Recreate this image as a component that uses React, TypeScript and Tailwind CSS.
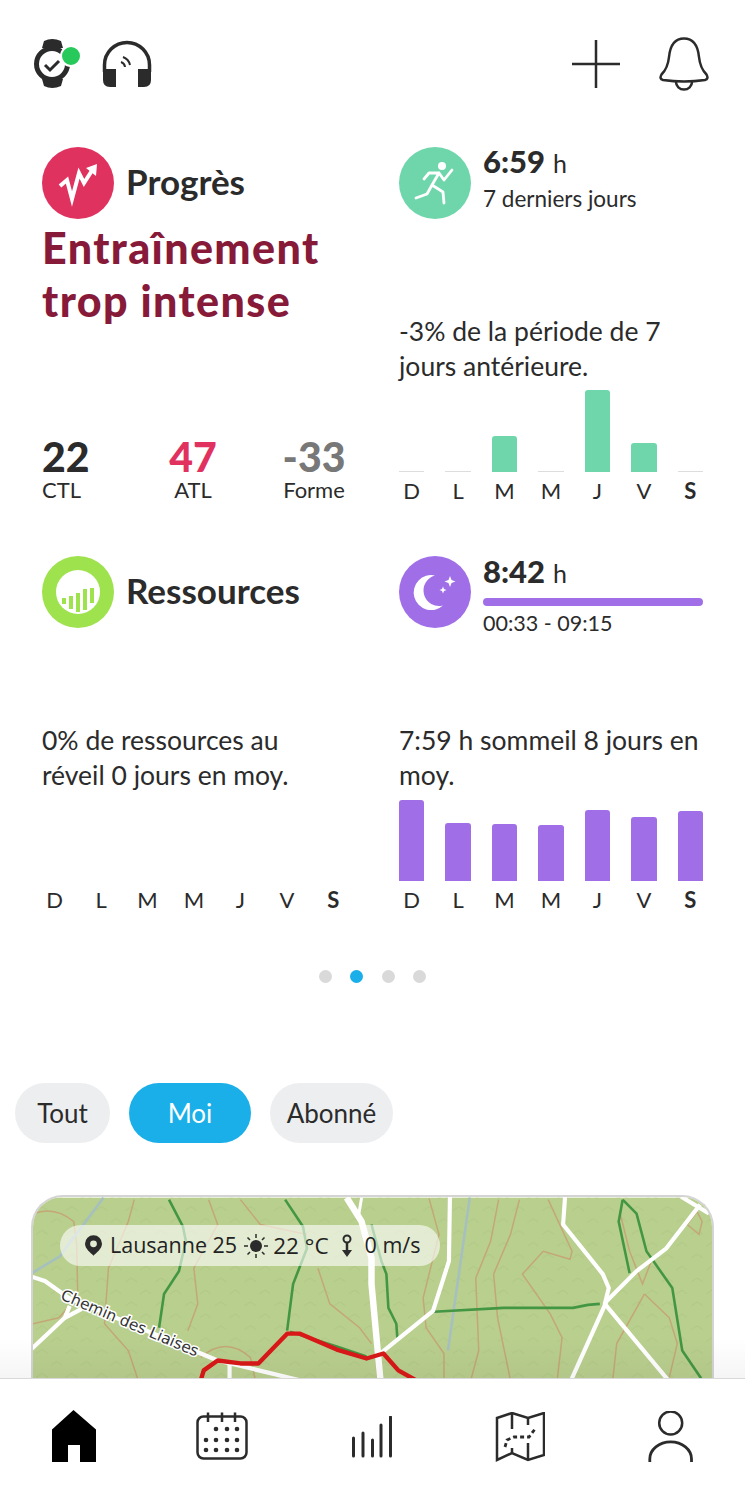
const days = ["D", "L", "M", "M", "J", "V", "S"];

function Chart({ values, barClass }: { values: number[]; barClass: string }) {
  return (
    <div>
      <div className="grid h-[82px] grid-cols-7 items-end gap-x-[21px]">
        {values.map((v, i) =>
          v > 0 ? (
            <div key={i} className={`rounded-t-[3px] ${barClass}`} style={{ height: v }} />
          ) : (
            <div key={i} className={barClass === "" ? "h-0" : "h-[1px] bg-[#dddddd]"} />
          ),
        )}
      </div>
      <div className="mt-[5px] grid grid-cols-7 gap-x-[21px]">
        {days.map((d, i) => (
          <div key={i} className={`text-center text-[22px] leading-[27px] ${i === 6 ? "font-bold" : ""}`}>
            {d}
          </div>
        ))}
      </div>
    </div>
  );
}

function WatchIcon() {
  return (
    <svg width="48" height="52" viewBox="0 0 48 52">
      <path d="M9 10 L11 3 Q19 -1 28 3 L30 10 Z M9 41 L11 48 Q19 52 28 48 L30 41 Z" fill="#2b2b2b" />
      <circle cx="19" cy="26" r="15.5" fill="#fff" stroke="#2b2b2b" strokeWidth="5" />
      <path d="M12 27 L17 32 L26 23" fill="none" stroke="#2b2b2b" strokeWidth="3" />
      <circle cx="38" cy="18" r="10" fill="#27c95b" stroke="#fff" strokeWidth="2" />
    </svg>
  );
}

function HeadphonesIcon() {
  return (
    <svg width="50" height="48" viewBox="0 0 50 48">
      <path d="M2.5 32 V25 A22.5 22.5 0 0 1 47.5 25 V32" fill="none" stroke="#2b2b2b" strokeWidth="3.5" />
      <path d="M1 29 H14 V47 H8 Q1 47 1 40 Z M49 29 H36 V47 H42 Q49 47 49 40 Z" fill="#2b2b2b" />
      <path d="M19 22 A6 6 0 0 1 23 27 M21 17 A11 11 0 0 1 28 25" fill="none" stroke="#2b2b2b" strokeWidth="2" />
    </svg>
  );
}

function PlusIcon() {
  return (
    <svg width="48" height="48" viewBox="0 0 48 48">
      <path d="M24 0 V48 M0 24 H48" stroke="#2b2b2b" strokeWidth="2.5" />
    </svg>
  );
}

function BellIcon() {
  return (
    <svg width="50" height="54" viewBox="0 0 50 54">
      <path
        d="M25 1.5 C15 1.5 11 10 10 20 C9 30 6 34 2.5 37.5 Q0 42 4 43 Q25 46 46 43 Q50 42 47.5 37.5 C44 34 41 30 40 20 C39 10 35 1.5 25 1.5 Z"
        fill="none"
        stroke="#2b2b2b"
        strokeWidth="2.5"
      />
      <path d="M17 45 A8 7.5 0 0 0 33 45" fill="none" stroke="#2b2b2b" strokeWidth="2.5" />
    </svg>
  );
}

function ProgressIcon() {
  return (
    <svg width="72" height="72" viewBox="0 0 72 72" className="shrink-0">
      <circle cx="36" cy="36" r="36" fill="#e0325f" />
      <path d="M18 39 L25 33 L30 52 L37 26 L42 36 L51 22" fill="none" stroke="#fff" strokeWidth="4" />
      <path d="M44 21 L55 17 L54 29 Z" fill="#fff" />
    </svg>
  );
}

function RunIcon() {
  return (
    <svg width="72" height="72" viewBox="0 0 72 72" className="shrink-0">
      <circle cx="36" cy="36" r="36" fill="#6fd6ab" />
      <circle cx="43" cy="19" r="4" fill="#fff" />
      <path
        d="M25 32 L30 26 L40 26 L33 38 L44 45 L45 56 M33 38 L28 47 L17 51 M40 26 L45 33 L53 23"
        fill="none"
        stroke="#fff"
        strokeWidth="2.8"
        strokeLinecap="round"
        strokeLinejoin="round"
      />
    </svg>
  );
}

function ResourceIcon() {
  return (
    <svg width="72" height="72" viewBox="0 0 72 72" className="shrink-0">
      <circle cx="36" cy="36" r="36" fill="#9ee24e" />
      <circle cx="36" cy="36" r="22" fill="#fff" />
      <path d="M22 42 V48 M29 40 V53 M36 37 V56 M43 33 V54 M50 32 V47" stroke="#9ee24e" strokeWidth="4" />
    </svg>
  );
}

function SleepIcon() {
  return (
    <svg width="72" height="72" viewBox="0 0 72 72" className="shrink-0">
      <circle cx="36" cy="36" r="36" fill="#a06fe8" />
      <path d="M36 19.5 A17.5 17.5 0 1 0 44 49.5 A15.5 15.5 0 0 1 36 19.5 Z" fill="#fff" />
      <path d="M51 20 L52.5 24 L56.5 25.5 L52.5 27 L51 31 L49.5 27 L45.5 25.5 L49.5 24 Z" fill="#fff" />
      <path d="M44 30.5 L45 33 L47.5 34 L45 35 L44 37.5 L43 35 L40.5 34 L43 33 Z" fill="#fff" />
    </svg>
  );
}

function MapDrawing() {
  const roads = [
    "M28 1275 L43 1280 L67 1297 L200 1353 L217 1360 L300 1380",
    "M28 1350 L63 1317 L68 1305 M80 1308 L63 1317",
    "M229 1362 V1380",
    "M451 1195 L450 1260 L434 1310 L382 1352",
    "M567 1195 L565 1223 L605 1273 L611 1287 L607 1303 L671 1380",
    "M703 1203 L669 1247 L639 1270 L609 1300 L573 1380",
    "M684 1195 L712 1212",
  ];
  const greens = [
    "M168 1198 L182 1225 L185 1240 L178 1270 L163 1293 L158 1327",
    "M285 1198 L303 1225 L307 1247 L293 1283 L287 1330",
    "M372 1223 L382 1260 L387 1273 L389 1307 L397 1323 L398 1337",
    "M435 1311 L505 1307 L575 1307 L590 1304 L602 1303",
    "M625 1198 L621 1220 L632 1272",
    "M625 1198 L639 1212 L649 1250 L675 1287 L685 1350 L704 1378",
    "M290 1331 L337 1346 L367 1356",
  ];
  const contours = [
    "M31 1212 Q53 1204 72 1220 L75 1243 L76 1290",
    "M133 1198 L127 1220 L107 1267 L103 1323 L127 1350 L137 1380",
    "M31 1323 L57 1317 L68 1305",
    "M208 1198 L217 1223 L193 1267 L197 1303 L187 1330",
    "M240 1198 L260 1223 L307 1233",
    "M318 1267 L330 1303 L360 1327 L372 1343",
    "M200 1357 Q225 1335 250 1357 L255 1380",
    "M430 1197 L440 1233 L424 1297 L427 1327 L445 1353 L445 1380",
    "M500 1198 L492 1240 L477 1277 L480 1350 L472 1380",
    "M521 1198 L512 1233 L495 1273 L499 1317 L512 1380",
    "M550 1198 L574 1250 L572 1258 L545 1250 L524 1273 L552 1313 L564 1337 L559 1380",
    "M647 1293 L672 1317 L680 1343 L672 1377 M647 1293 L619 1343 L615 1380",
    "M632 1250 L645 1283 L655 1257",
    "M622 1210 L632 1250",
    "M700 1210 L690 1223 L702 1233 L705 1220 Z",
    "M372 1290 L378 1380",
  ];
  return (
    <svg viewBox="31 1196 684 184" className="block h-[184px] w-full">
      <defs>
        <pattern id="chev" x="0" y="0" width="30" height="24" patternUnits="userSpaceOnUse">
          <path d="M4 9 L10 5 L16 9 M19 21 L25 17 L30 21" fill="none" stroke="#afc684" strokeWidth="1" />
        </pattern>
      </defs>
      <rect x="31" y="1196" width="684" height="184" fill="#b9cf8e" />
      <rect x="31" y="1196" width="684" height="184" fill="url(#chev)" />
      <g fill="none" stroke="#c4a776" strokeWidth="1.5">
        {contours.map((d) => (
          <path key={d} d={d} />
        ))}
      </g>
      <path
        d="M102 1196 L58 1255 L30 1272 M58 1255 L72 1235 M471 1196 L449 1350"
        fill="none"
        stroke="#a5c0bf"
        strokeWidth="2.6"
      />
      <g fill="none" stroke="#439643" strokeWidth="2.6">
        {greens.map((d) => (
          <path key={d} d={d} />
        ))}
      </g>
      <g fill="none" stroke="#ffffff" strokeWidth="4.2" strokeLinejoin="round">
        {roads.map((d) => (
          <path key={d} d={d} />
        ))}
      </g>
      <path d="M347 1196 L362 1220 L372 1257 L372 1283 L381 1380" fill="none" stroke="#fff" strokeWidth="6.5" />
      <path d="M362 1196 L359 1214" fill="none" stroke="#fff" strokeWidth="3" />
      <path
        d="M200 1380 L203 1370 L217 1360 L240 1363 L258 1363 L287 1333 L300 1333 L337 1349 L367 1358 L384 1353 L399 1370 L417 1380"
        fill="none"
        stroke="#d91818"
        strokeWidth="4.4"
        strokeLinejoin="round"
      />
      <text
        x="58"
        y="1298"
        transform="rotate(23 58 1298)"
        fontSize="15.5"
        fill="#333"
        stroke="#fff"
        strokeWidth="3"
        paintOrder="stroke"
        fontFamily="'DejaVu Sans', sans-serif"
      >
        Chemin des Liaises
      </text>
    </svg>
  );
}

function NavIcons() {
  return (
    <nav className="grid h-[122px] shrink-0 grid-cols-5 items-start border-t border-[#d9d9d9] bg-white pt-[31px]">
      <div className="flex justify-center">
        <svg width="46" height="52" viewBox="0 0 46 52" className="-ml-[1px]">
          <path d="M22.5 0 L45 19.5 V52 H29 V35 H17 V52 H1 V19.5 Z" fill="#000" />
        </svg>
      </div>
      <div className="flex justify-center pt-[2px]">
        <svg width="52" height="50" viewBox="197 1412 52 50" className="-ml-[3px]">
          <rect x="198.5" y="1416.5" width="49" height="42" rx="6" fill="none" stroke="#2b2b2b" strokeWidth="2.5" />
          <path d="M209 1412.5 V1422 M223 1412.5 V1422 M236 1412.5 V1422" stroke="#2b2b2b" strokeWidth="2.5" />
          <g fill="#2b2b2b">
            {[217, 228, 238].map((x) => (
              <circle key={x} cx={x} cy={1429} r="2.3" />
            ))}
            {[207, 217, 228, 238].map((x) => (
              <circle key={x} cx={x} cy={1440} r="2.3" />
            ))}
            {[207, 217, 228, 238].map((x) => (
              <circle key={x} cx={x} cy={1450} r="2.3" />
            ))}
          </g>
        </svg>
      </div>
      <div className="flex justify-center pt-[6px]">
        <svg width="42" height="42" viewBox="352 1416 42 42">
          <path
            d="M353.5 1438 V1456 M363 1433 V1456 M372.5 1440 V1456 M381 1425 V1456 M390.5 1417 V1456"
            stroke="#2b2b2b"
            strokeWidth="3"
            strokeLinecap="round"
          />
        </svg>
      </div>
      <div className="flex justify-center pt-[2px]">
        <svg width="50" height="50" viewBox="495 1412 50 50" className="-ml-[3px]">
          <path
            d="M497 1418 L512 1413 L528 1418 L544 1413 V1455 L528 1460 L512 1453 L497 1460 Z"
            fill="none"
            stroke="#2b2b2b"
            strokeWidth="2.5"
          />
          <path d="M512 1413 V1429 M512 1448 V1453 M528 1418 V1425 M528 1443 V1460" stroke="#2b2b2b" strokeWidth="2.5" />
          <path
            d="M505 1447 L507 1440 L514 1437 L529 1437 L535 1429"
            fill="none"
            stroke="#2b2b2b"
            strokeWidth="2.8"
            strokeDasharray="4 3"
          />
        </svg>
      </div>
      <div className="flex justify-center pt-[1px]">
        <svg width="46" height="52" viewBox="647 1411 46 52">
          <circle cx="669.7" cy="1423" r="11.5" fill="none" stroke="#2b2b2b" strokeWidth="2.5" />
          <path d="M648.8 1462 V1459 A20.8 17 0 0 1 690.5 1459 V1462" fill="none" stroke="#2b2b2b" strokeWidth="2.8" />
        </svg>
      </div>
    </nav>
  );
}

export default function App() {
  return (
    <div className="flex h-[1500px] w-[745px] flex-col overflow-hidden bg-white font-['Lato',sans-serif] text-[#2b2b2b]">
      <main className="relative min-h-0 flex-1 overflow-hidden">
        <header className="mt-[38px] flex h-[52px] items-center justify-between pl-[33px] pr-[36px]">
          <div className="flex items-center gap-[21px]">
            <WatchIcon />
            <HeadphonesIcon />
          </div>
          <div className="flex items-center gap-[39px]">
            <PlusIcon />
            <BellIcon />
          </div>
        </header>

        <section className="mt-[57px] grid grid-cols-2 gap-x-[53px] gap-y-[52px] px-[42px]">
          <div className="flex h-[357px] flex-col">
            <div className="flex items-center gap-[12px]">
              <ProgressIcon />
              <div className="-mt-[3px] text-[35px] font-bold">Progrès</div>
            </div>
            <h1 className="mt-[2px] whitespace-nowrap text-[43px] font-black leading-[53px] tracking-[1.4px] text-[#861a38]">
              Entraînement
              <br />
              trop intense
            </h1>
            <div className="mb-[4px] mt-auto grid w-[312px] grid-cols-[121px_111px_80px]">
              <div>
                <div className="text-[41px] font-black leading-[46px]">22</div>
                <div className="text-[22px] leading-[20px]">CTL</div>
              </div>
              <div className="w-[60px] text-center">
                <div className="text-[41px] font-black leading-[46px] text-[#e0315f]">47</div>
                <div className="text-[22px] leading-[20px]">ATL</div>
              </div>
              <div className="text-center">
                <div className="text-[41px] font-black leading-[46px] text-[#787878]">-33</div>
                <div className="text-[22px] leading-[20px]">Forme</div>
              </div>
            </div>
          </div>

          <div className="flex h-[357px] flex-col">
            <div className="flex items-start gap-[12px]">
              <RunIcon />
              <div className="-mt-[3px]">
                <div className="text-[31px] leading-[34px]">
                  <span className="font-black">6:59</span> <span className="text-[25px]">h</span>
                </div>
                <div className="mt-[4px] text-[22.5px] leading-[30px]">7 derniers jours</div>
              </div>
            </div>
            <div className="mt-auto text-[26.5px] leading-[35px]">-3% de la période de 7 jours antérieure.</div>
            <div className="mt-[6px]">
              <Chart values={[0, 0, 36, 0, 82, 29, 0]} barClass="bg-[#6fd6ab]" />
            </div>
          </div>

          <div className="flex h-[357px] flex-col">
            <div className="flex items-center gap-[12px]">
              <ResourceIcon />
              <div className="-mt-[3px] text-[35px] font-bold">Ressources</div>
            </div>
            <div className="mt-auto text-[26.5px] leading-[35px]">
              0% de ressources au
              <br />
              réveil 0 jours en moy.
            </div>
            <div className="mt-[6px]">
              <Chart values={[0, 0, 0, 0, 0, 0, 0]} barClass="" />
            </div>
          </div>

          <div className="flex h-[357px] flex-col">
            <div className="flex items-start gap-[12px]">
              <SleepIcon />
              <div className="-mt-[2px] flex-1">
                <div className="text-[31px] leading-[34px]">
                  <span className="font-black">8:42</span> <span className="text-[25px]">h</span>
                </div>
                <div className="mt-[8px] h-[8px] rounded-full bg-[#a06fe8]" />
                <div className="mt-[1px] text-[21.5px] leading-[32px]">00:33 - 09:15</div>
              </div>
            </div>
            <div className="mt-auto text-[26.5px] leading-[35px]">7:59 h sommeil 8 jours en moy.</div>
            <div className="mt-[6px]">
              <Chart values={[81, 58, 57, 56, 71, 64, 70]} barClass="bg-[#a06fe8]" />
            </div>
          </div>
        </section>

        <div className="mt-[57px] flex justify-center gap-[18.5px]">
          <span className="size-[13px] rounded-full bg-[#d9d9d9]" />
          <span className="size-[13px] rounded-full bg-[#1aafe8]" />
          <span className="size-[13px] rounded-full bg-[#d9d9d9]" />
          <span className="size-[13px] rounded-full bg-[#d9d9d9]" />
        </div>

        <div className="mt-[100px] flex gap-[19px] pl-[15px] text-[26px]">
          <div className="flex h-[60px] w-[95px] items-center justify-center rounded-full bg-[#eceef0]">Tout</div>
          <div className="flex h-[60px] w-[122px] items-center justify-center rounded-full bg-[#1aafe8] text-white">Moi</div>
          <div className="flex h-[60px] w-[123px] items-center justify-center rounded-full bg-[#eceef0]">Abonné</div>
        </div>

        <div className="relative mx-[31px] mt-[52px] overflow-hidden rounded-t-[32px] border-x-2 border-t-2 border-[#d4d4d4]">
          <MapDrawing />
          <div className="absolute left-[27px] top-[28px] flex h-[41px] w-[380px] items-center rounded-full bg-white/60 pl-[25px] font-['Open_Sans',sans-serif] text-[21.5px] text-[#222]">
            <svg width="17" height="23" viewBox="0 0 20 24" className="shrink-0">
              <path
                fillRule="evenodd"
                d="M10 0 A10 10 0 0 1 20 10 C20 16 13 21 10 24 C7 21 0 16 0 10 A10 10 0 0 1 10 0 Z M10 6 A4 4 0 1 0 10 14 A4 4 0 1 0 10 6 Z"
                fill="#2b2b2b"
              />
            </svg>
            <span className="ml-[8px]">Lausanne 25</span>
            <svg width="24" height="24" viewBox="0 0 24 24" className="ml-[7px] shrink-0">
              <circle cx="12" cy="12" r="6" fill="#2b2b2b" />
              <path
                d="M12 0 V4 M12 20 V24 M0 12 H4 M20 12 H24 M3.5 3.5 L6 6 M18 18 L20.5 20.5 M3.5 20.5 L6 18 M18 6 L20.5 3.5"
                stroke="#2b2b2b"
                strokeWidth="1.5"
              />
            </svg>
            <span className="ml-[5px] whitespace-nowrap text-[22.5px]">22 °C</span>
            <svg width="14" height="24" viewBox="0 0 14 24" className="ml-[11px] shrink-0">
              <circle cx="7" cy="5" r="3.5" fill="none" stroke="#2b2b2b" strokeWidth="2" />
              <path d="M7 8 V20" stroke="#2b2b2b" strokeWidth="2.5" />
              <path d="M2 16 L7 23 L12 16 Z" fill="#2b2b2b" />
            </svg>
            <span className="ml-[11px] whitespace-nowrap">0 m/s</span>
          </div>
        </div>
        <div className="absolute inset-x-0 bottom-0 h-[40px] bg-gradient-to-b from-transparent to-black/[0.04]" />
      </main>
      <NavIcons />
    </div>
  );
}
